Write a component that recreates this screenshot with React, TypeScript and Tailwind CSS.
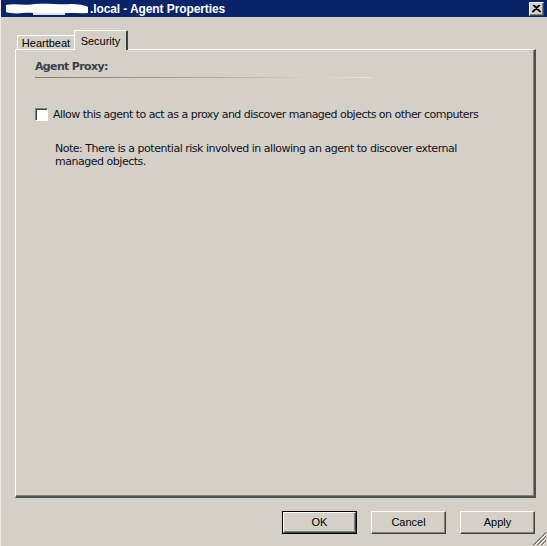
import React from 'react';

// Win classic bevel helpers, written out as plain class strings
const raised =
  'border-t border-l border-t-white border-l-white border-r border-b border-r-[#404040] border-b-[#404040] shadow-[inset_-1px_-1px_0_#808080]';

interface DialogButtonProps {
  label: string;
  isDefault?: boolean;
}

const DialogButton: React.FC<DialogButtonProps> = ({ label, isDefault }) => (
  <div className={isDefault ? 'border border-black' : ''}>
    <button
      className={`${isDefault ? 'w-[73px] h-[21px]' : 'w-[75px] h-[23px]'} ${raised} bg-[#d4d0c8] text-[11px] text-black flex items-center justify-center font-['Liberation_Sans',Arial,sans-serif]`}
    >
      {label}
    </button>
  </div>
);

const App: React.FC = () => {
  return (
    <div className="w-[547px] h-[546px] bg-[#d4d0c8] flex flex-col overflow-hidden font-['Liberation_Sans',Arial,sans-serif] border-l border-l-[#ece9e2]">
      {/* Title bar */}
      <div className="h-[17px] bg-[#0a246a] flex items-center pl-[4px] pr-[3px] shrink-0">
        {/* blotted-out host name */}
        <svg width="84" height="13" viewBox="0 0 84 13" className="shrink-0">
          <path
            d="M1 3 C10 1 20 4 30 2 C42 1 55 3 66 2 C72 2 80 3 83 5 L83 11 C74 12 64 10 54 12 C42 12 30 10 18 11 C10 12 4 11 1 10 Z"
            fill="#ffffff"
          />
          <path d="M28 11 L60 11 L60 13 L28 13 Z" fill="#dfe3ee" />
        </svg>
        <span className="text-white font-bold text-[12px] leading-none ml-[1px] tracking-[-0.1px]">.local - Agent Properties</span>
        <div className="flex-1" />
        <div className={`w-[15px] h-[14px] ${raised} bg-[#d4d0c8] flex items-center justify-center`}>
          <svg width="9" height="8" viewBox="0 0 9 8">
            <path d="M1 0 L8 7 M8 0 L1 7 M2 0 L9 7 M7 0 L0 7" stroke="#000" strokeWidth="1.1" />
          </svg>
        </div>
      </div>

      {/* Tabs + page */}
      <div className="flex flex-col pl-[14px] pr-[11px] pt-[13px] flex-1">
        <div className="flex items-end pl-[2px] h-[20px] relative z-10 -mb-px">
          <div className="h-[15px] w-[58px] border-t border-l border-t-white border-l-white border-r border-r-[#808080] rounded-tl-[2px] flex items-center justify-center pt-px text-[11px] text-black">
            Heartbeat
          </div>
          <div className="h-[20px] w-[54px] -ml-px border-t border-l border-t-white border-l-white border-r-2 border-r-[#404040] rounded-t-[2px] bg-[#d4d0c8] flex items-start justify-center pt-[2px] text-[11px] text-black">
            Security
          </div>
        </div>

        <div className="h-[449px] border-t border-l border-t-white border-l-white border-r-2 border-b-2 border-r-[#505050] border-b-[#505050] shadow-[inset_-1px_-1px_0_#808080] pl-[19px] pt-[10px] font-['DejaVu_Sans',Verdana,sans-serif]">
          <div className="text-[11px] font-bold text-[#3e3e4a] leading-[13px] tracking-[-0.65px]">Agent Proxy:</div>
          <div className="mt-[4px] h-px w-[336px] bg-gradient-to-r from-[#808080] via-[#a8a6a2] to-[#e8e6e2]" />

          <label className="flex items-center mt-[30px] gap-[5px]">
            <span className="w-[13px] h-[13px] bg-white border-t border-l border-t-[#808080] border-l-[#808080] border-b border-r border-b-white border-r-white shadow-[inset_1px_1px_0_#404040] shrink-0" />
            <span className="text-[11px] text-[#101020] tracking-[-0.53px] leading-[13px]">
              Allow this agent to act as a proxy and discover managed objects on other computers
            </span>
          </label>

          <p className="ml-[20px] mt-[21px] w-[430px] text-[11px] text-[#101020] tracking-[-0.48px] leading-[13px]">
            Note: There is a potential risk involved in allowing an agent to discover external managed objects.
          </p>
        </div>

        {/* Dialog buttons */}
        <div className="flex justify-end gap-[14px] mt-[13px] pr-[1px]">
          <DialogButton label="OK" isDefault />
          <DialogButton label="Cancel" />
          <DialogButton label="Apply" />
        </div>
      </div>

      {/* size grip */}
      <div className="flex justify-end shrink-0">
        <svg width="14" height="14" viewBox="0 0 14 14" className="-mt-[14px]">
          <path d="M13 1 L1 13 M13 5 L5 13 M13 9 L9 13" stroke="#808080" strokeWidth="1" />
          <path d="M13 2 L2 13 M13 6 L6 13 M13 10 L10 13" stroke="#ffffff" strokeWidth="1" />
          <path d="M13 0 L0 13 M13 4 L4 13 M13 8 L8 13" stroke="#808080" strokeWidth="1" />
        </svg>
      </div>
    </div>
  );
};

export default App;
